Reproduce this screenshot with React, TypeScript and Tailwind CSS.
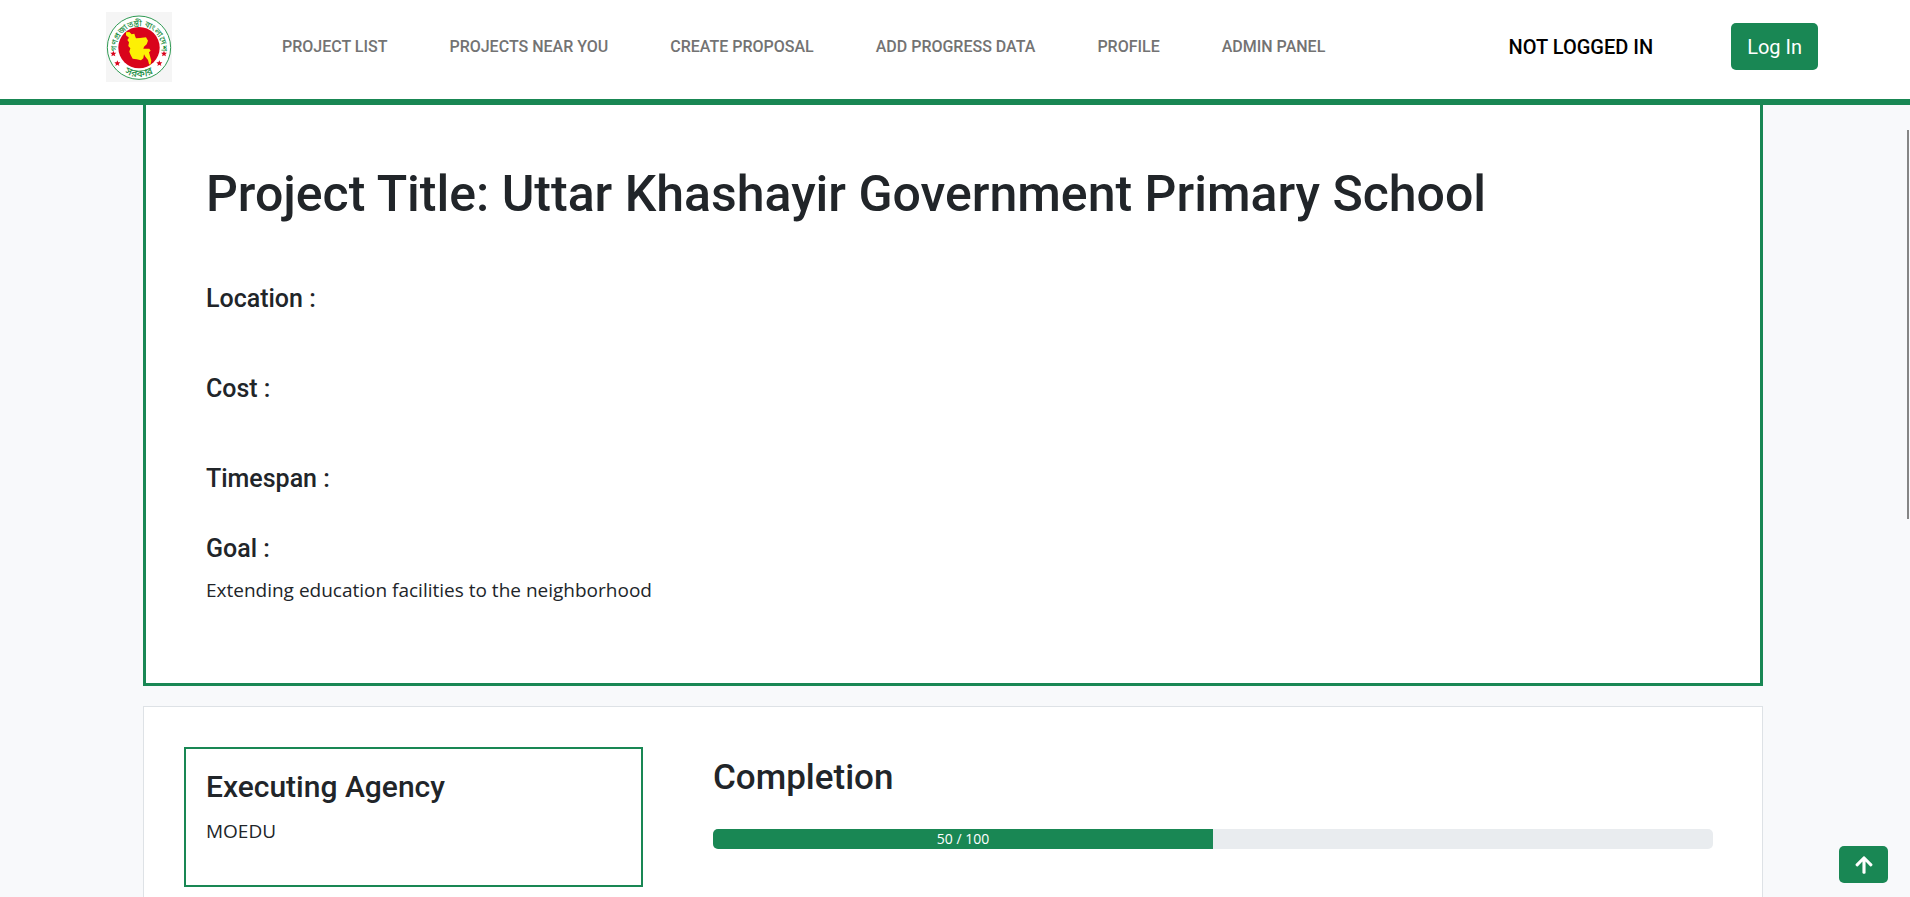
import { FaArrowUp } from "react-icons/fa";

const navLinks = [
  "PROJECT LIST",
  "PROJECTS NEAR YOU",
  "CREATE PROPOSAL",
  "ADD PROGRESS DATA",
  "PROFILE",
  "ADMIN PANEL",
];

const stars = [
  { x: 22, y: 125 },
  { x: 34, y: 154 },
  { x: 174, y: 125 },
  { x: 160, y: 154 },
];

const starPoints = "0,-9 2.5,-3 9,-3 4,2 6,8 0,4.5 -6,8 -4,2 -9,-3 -2.5,-3";

function Seal() {
  return (
    <svg viewBox="0 0 198 210" className="h-[70px] w-[66px]" role="img" aria-label="Government seal">
      <defs>
        <path id="seal-top" d="M32.4 117 A67 67 0 1 1 165.6 117" />
        <path id="seal-bottom" d="M36 168 A87 87 0 0 0 162 168" />
      </defs>
      <rect width="198" height="210" fill="#f5f5f5" />
      <circle cx="99" cy="107" r="95" fill="#fff" stroke="#2f9a53" strokeWidth="3" />
      <circle cx="99" cy="107" r="62" fill="#d9031b" />
      <path
        d="M60 61L70 60L77 67L85 65L88 74L90 79L102 78L120 76L126 86L122 97L114 104L112 110L130 110L134 116L129 121L132 132L136 146L133 159L129 156L126 144L118 134L114 127L112 139L105 145L92 142L80 140L74 129L70 119L73 109L67 102L69 91L64 84L69 77L60 70Z"
        fill="#fdf004"
      />
      <g fill="#1f9147" fontFamily="'Noto Sans Bengali', 'Noto Sans', sans-serif" fontWeight="500">
        <text textAnchor="middle" fontSize="25">
          <textPath href="#seal-top" startOffset="50%">গণপ্রজাতন্ত্রী বাংলাদেশ</textPath>
        </text>
        <text textAnchor="middle" fontSize="31">
          <textPath href="#seal-bottom" startOffset="50%">সরকার</textPath>
        </text>
      </g>
      {stars.map((s) => (
        <polygon key={`${s.x}-${s.y}`} points={starPoints} fill="#d9031b" transform={`translate(${s.x} ${s.y})`} />
      ))}
    </svg>
  );
}

function Header() {
  return (
    <header className="flex h-[105px] shrink-0 items-start border-b-6 border-[#198754] bg-white pt-3 pr-[92px] pl-[106px]">
      <a href="#home">
        <Seal />
      </a>
      <nav className="ml-[110px] flex gap-[62px] pt-[23px]">
        {navLinks.map((label) => (
          <a key={label} href="#nav" className="text-base leading-6 font-medium whitespace-nowrap text-[#737373]">
            {label}
          </a>
        ))}
      </nav>
      <div className="ml-auto flex items-center gap-[78px] pt-[11px]">
        <span className="text-xl font-medium whitespace-nowrap text-black">NOT LOGGED IN</span>
        <button type="button" className="h-[47px] rounded-[5px] bg-[#198754] px-4 text-xl text-white">
          Log In
        </button>
      </div>
    </header>
  );
}

function ProjectCard() {
  return (
    <section className="border-x-3 border-b-3 border-[#198754] bg-white px-[60px] pt-[59px] pb-[77px]">
      <h1 className="text-[50px] leading-[60px] font-medium">Project Title: Uttar Khashayir Government Primary School</h1>
      <h2 className="mt-[60px] text-[25px] leading-[30px] font-medium">Location :</h2>
      <h2 className="mt-[60px] text-[25px] leading-[30px] font-medium">Cost :</h2>
      <h2 className="mt-[60px] text-[25px] leading-[30px] font-medium">Timespan :</h2>
      <h2 className="mt-10 text-[25px] leading-[30px] font-medium">Goal :</h2>
      <p className="mt-[10px] font-['Open_Sans',sans-serif] text-[19px] leading-8">
        Extending education facilities to the neighborhood
      </p>
    </section>
  );
}

function StatusCard() {
  const done = 50;
  const total = 100;
  return (
    <section className="mt-5 grid grid-cols-[459fr_1000fr] items-start gap-[70px] border border-[#dee2e6] bg-white pt-10 pr-[49px] pb-10 pl-10">
      <div className="border-2 border-[#198754] px-5 pt-5 pb-[38px]">
        <h3 className="text-[30px] leading-[36px] font-medium">Executing Agency</h3>
        <p className="mt-[10px] font-['Open_Sans',sans-serif] text-[19px] leading-8">MOEDU</p>
      </div>
      <div className="pt-[10px]">
        <h2 className="text-[35px] leading-[42px] font-medium">Completion</h2>
        <div
          role="progressbar"
          aria-label="Completion"
          aria-valuenow={done}
          aria-valuemax={total}
          className="mt-[30px] h-5 overflow-hidden rounded-[5px] bg-[#e9ecef]"
        >
          <div
            className="h-5 bg-[#198754] text-center font-['Open_Sans',sans-serif] text-sm leading-5 text-white"
            style={{ width: `${(done / total) * 100}%` }}
          >
            {done} / {total}
          </div>
        </div>
      </div>
    </section>
  );
}

export default function App() {
  return (
    <div className="flex h-screen flex-col overflow-hidden bg-[#f8f9fb] font-['Roboto',sans-serif] text-[#212529]">
      <Header />
      <main className="min-h-0 flex-1 overflow-hidden pr-1">
        <div className="mx-auto w-[85%]">
          <ProjectCard />
          <StatusCard />
        </div>
      </main>
      <div className="fixed top-[130px] right-px h-[389px] w-0.5 bg-[#858585]" />
      <button
        type="button"
        aria-label="Back to top"
        className="fixed right-[22px] bottom-[14px] flex h-[37px] w-[49px] items-center justify-center rounded-[5px] bg-[#198754] text-white"
      >
        <FaArrowUp size={20} />
      </button>
    </div>
  );
}
